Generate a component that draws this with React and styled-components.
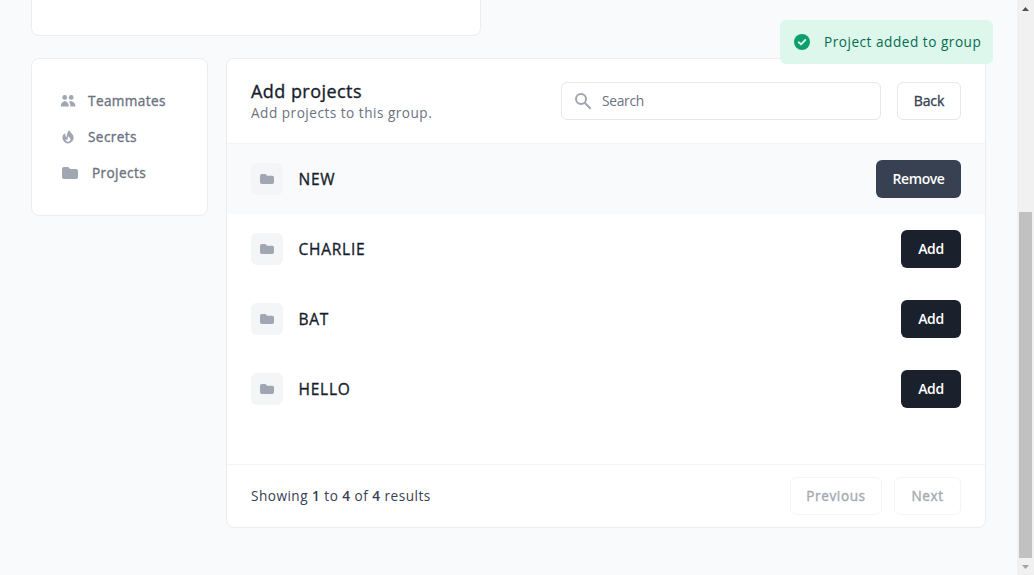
import React from "react";
import styled, { createGlobalStyle, css } from "styled-components";

const Global = createGlobalStyle`
  *, *::before, *::after { box-sizing: border-box; }
  html, body { margin: 0; height: 100%; overflow: hidden; }
  body { background: #f9fafc; color: #1a202c; font-family: "Open Sans", "Noto Sans", sans-serif; font-size: 14px; line-height: 20px; }
  button, input { font: inherit; margin: 0; }
`;

/* Open Sans has no medium cut, so a hairline stroke thickens the regular one */
const medium = css`
  font-weight: 400;
  -webkit-text-stroke: 0.35px currentColor;
`;

const Screen = styled.div`
  display: flex;
  width: 100%;
  height: 575px;
  overflow: hidden;
`;
const Page = styled.main`
  flex: 1;
  min-width: 0;
  padding: 0 31px;
`;
const Card = styled.section`
  background: #fff;
  border: 1px solid #ebedef;
  border-radius: 8px;
`;
const PreviousCard = styled(Card)`
  width: 450px;
  height: 36px;
  border-top: 0;
  border-top-left-radius: 0;
  border-top-right-radius: 0;
`;
const Columns = styled.div`
  display: flex;
  align-items: flex-start;
  gap: 18px;
  margin-top: 22px;
`;
const SideNav = styled(Card)`
  width: 177px;
  height: 158px;
  padding: 24px 28px;
`;
const NavItem = styled.a`
  ${medium}
  display: flex;
  align-items: center;
  height: 36px;
  color: #6b7280;
  font-size: 13.6px;
  letter-spacing: 0.4px;
  white-space: nowrap;
  svg { flex: none; margin-right: ${(p) => p.$gap}; color: #a0a6b2; }
`;
const NavFolder = styled.span`
  display: flex;
  padding-left: 2px;
`;
const Panel = styled(Card)`
  width: 760px;
  height: 470px;
  flex: none;
  display: flex;
  flex-direction: column;
  overflow: hidden;
`;
const PanelHeader = styled.header`
  display: flex;
  align-items: center;
  height: 85px;
  padding: 0 24px;
  border-bottom: 1px solid #f3f4f6;
`;
const Heading = styled.div`flex: 1; white-space: nowrap;`;
const Title = styled.h2`
  ${medium}
  margin: 0;
  font-size: 18px;
  line-height: 22px;
  letter-spacing: 0.45px;
  color: #161e2e;
`;
const Subtitle = styled.p`
  margin: 0;
  padding-top: 1px;
  line-height: 20px;
  font-size: 13.6px;
  letter-spacing: 0.5px;
  color: #6b7280;
`;
const SearchBox = styled.label`
  display: flex;
  align-items: center;
  width: 320px;
  height: 38px;
  margin-right: 16px;
  padding-left: 13px;
  border: 1px solid #e5e7eb;
  border-radius: 6px;
  svg { flex: none; color: #9fa6b2; }
`;
const SearchInput = styled.input`
  flex: 1;
  min-width: 0;
  margin-left: 10px;
  padding: 0;
  border: 0;
  outline: 0;
  background: none;
  font-size: 13.8px;
  letter-spacing: -0.3px;
  &::placeholder { color: #6b7280; opacity: 1; }
`;
const Button = styled.button`
  ${medium}
  display: flex;
  align-items: center;
  justify-content: center;
  width: ${(p) => p.$width};
  height: 38px;
  padding: 0;
  border: 1px solid #e5e7eb;
  border-radius: 6px;
  background: #fff;
  color: #374151;
  font-size: 14px;
  letter-spacing: -0.15px;
`;
const SolidButton = styled(Button)`
  border: 0;
  color: #fff;
  font-weight: 600;
  -webkit-text-stroke: 0;
  letter-spacing: -0.4px;
  background: ${(p) => (p.$added ? "#374151" : "#1a202c")};
`;
const PagerButton = styled(Button)`
  border-color: #f3f4f6;
  color: #a3a8b0;
  font-size: 13.6px;
  letter-spacing: 0.6px;
`;
const Rows = styled.ul`
  flex: 1;
  margin: 0;
  padding: 0;
  list-style: none;
`;
const Row = styled.li`
  display: flex;
  align-items: center;
  height: 70px;
  padding: 0 24px;
  background: ${(p) => (p.$active ? "#f9fafc" : "#fff")};
`;
const IconTile = styled.span`
  display: flex;
  align-items: center;
  justify-content: center;
  width: 32px;
  height: 32px;
  margin-right: 15.5px;
  border-radius: 6px;
  background: #f4f5f7;
  color: #a0a6b2;
`;
const ProjectName = styled.span`
  ${medium}
  flex: 1;
  font-size: 15.5px;
  letter-spacing: 0.75px;
  color: #161e2e;
`;
const Footer = styled.footer`
  display: flex;
  align-items: center;
  gap: 12px;
  height: 63px;
  padding: 0 24px;
  border-top: 1px solid #f3f4f6;
`;
const Summary = styled.p`
  flex: 1;
  margin: 0;
  color: #374151;
  font-size: 13.6px;
  letter-spacing: 0.48px;
  strong { font-weight: 600; }
`;
const Toast = styled.div`
  position: fixed;
  top: 20px;
  left: 780px;
  display: flex;
  align-items: center;
  width: 213px;
  height: 44px;
  padding-left: 14px;
  border-radius: 6px;
  background: #def7ec;
  color: #046c4e;
  font-size: 13.6px;
  letter-spacing: 0.52px;
  white-space: nowrap;
  svg { flex: none; margin-right: 14px; }
`;
const Scrollbar = styled.div`
  display: flex;
  flex-direction: column;
  align-items: center;
  width: 17px;
  height: 575px;
  background: #f1f1f1;
  svg { display: block; flex: none; }
`;
const Thumb = styled.div`
  width: 13px;
  height: 346px;
  margin-top: 195px;
  background: #c1c1c1;
`;

const FolderIcon = ({ w, h }) => (
  <svg width={w} height={h} viewBox="0 0 16 12" preserveAspectRatio="none" fill="currentColor">
    <path d="M2 0h4.2L8.2 2H14a2 2 0 0 1 2 2v6a2 2 0 0 1-2 2H2a2 2 0 0 1-2-2V2a2 2 0 0 1 2-2Z" />
  </svg>
);
const TeamIcon = () => (
  <svg width="16" height="14" viewBox="0 0 16 14" fill="currentColor">
    <circle cx="4.7" cy="3.4" r="2.4" />
    <circle cx="11.2" cy="3.4" r="2.4" />
    <path d="M.8 12.600c0-3 1.700-5.300 4-5.300s4 2.300 4 5.300Z" />
    <path d="M10.400 12.600c0-2-.5-3.800-1.500-4.900.6-.3 1.300-.4 2-.4 2.600 0 4.500 2.300 4.500 5.300Z" />
  </svg>
);
const FlameIcon = () => (
  <svg width="16" height="16" viewBox="0 0 20 20" fill="currentColor">
    <path fillRule="evenodd" clipRule="evenodd" d="M12.395 2.553a1 1 0 00-1.450-.385c-.345.230-.614.558-.822.880-.214.330-.403.713-.570 1.116-.334.804-.614 1.768-.840 2.734a31.365 31.365 0 00-.613 3.580 2.640 2.640 0 01-.945-1.067c-.328-.680-.398-1.534-.398-2.654A1 1 0 005.050 6.050 6.981 6.981 0 003 11a7 7 0 1011.950-4.950c-.592-.591-.980-.985-1.348-1.467-.363-.476-.724-1.063-1.207-2.030zM12.120 15.120A3 3 0 017 13s.879.500 2.500.500c0-1 .500-4 1.250-4.500.500 1 .786 1.293 1.371 1.879A2.990 2.990 0 0113 13a2.990 2.990 0 01-.879 2.121z" />
  </svg>
);
const SearchIcon = () => (
  <svg width="17" height="17" viewBox="0 0 17 17" fill="none" stroke="currentColor" strokeWidth="2">
    <circle cx="6" cy="6" r="5" />
    <path d="M9.700 9.700 15.700 15.700" />
  </svg>
);
const CheckIcon = () => (
  <svg width="16" height="16" viewBox="0 0 16 16">
    <circle cx="8" cy="8" r="8" fill="#0e9f6e" />
    <path d="M4.700 8.300 7 10.300 11.300 6" fill="none" stroke="#def7ec" strokeWidth="1.800" strokeLinecap="round" strokeLinejoin="round" />
  </svg>
);
const Arrow = ({ down }) => (
  <svg width="17" height="17" viewBox="0 0 17 17">
    <path d={down ? "M5 7h7L8.500 11Z" : "M5 11h7L8.500 7Z"} fill={down ? "#a3a3a3" : "#505050"} />
  </svg>
);

const projects = [
  { name: "NEW", added: true },
  { name: "CHARLIE" },
  { name: "BAT" },
  { name: "HELLO" },
];

export default function App() {
  return (
    <>
      <Global />
      <Screen>
        <Page>
          <PreviousCard />
          <Columns>
            <SideNav as="nav">
              <NavItem $gap="12px"><TeamIcon />Teammates</NavItem>
              <NavItem $gap="12px"><FlameIcon />Secrets</NavItem>
              <NavItem $gap="14px">
                <NavFolder><FolderIcon w={16} h={12} /></NavFolder>Projects
              </NavItem>
            </SideNav>
            <Panel>
              <PanelHeader>
                <Heading>
                  <Title>Add projects</Title>
                  <Subtitle>Add projects to this group.</Subtitle>
                </Heading>
                <SearchBox><SearchIcon /><SearchInput placeholder="Search" /></SearchBox>
                <Button $width="64px">Back</Button>
              </PanelHeader>
              <Rows>
                {projects.map((p) => (
                  <Row key={p.name} $active={p.added}>
                    <IconTile><FolderIcon w={14} h={10} /></IconTile>
                    <ProjectName>{p.name}</ProjectName>
                    <SolidButton $added={p.added} $width={p.added ? "85px" : "60px"}>
                      {p.added ? "Remove" : "Add"}
                    </SolidButton>
                  </Row>
                ))}
              </Rows>
              <Footer>
                <Summary>
                  Showing <strong>1</strong> to <strong>4</strong> of <strong>4</strong> results
                </Summary>
                <PagerButton $width="92px" disabled>Previous</PagerButton>
                <PagerButton $width="67px" disabled>Next</PagerButton>
              </Footer>
            </Panel>
          </Columns>
        </Page>
        <Scrollbar>
          <Arrow />
          <Thumb />
          <Arrow down />
        </Scrollbar>
        <Toast role="status"><CheckIcon />Project added to group</Toast>
      </Screen>
    </>
  );
}
